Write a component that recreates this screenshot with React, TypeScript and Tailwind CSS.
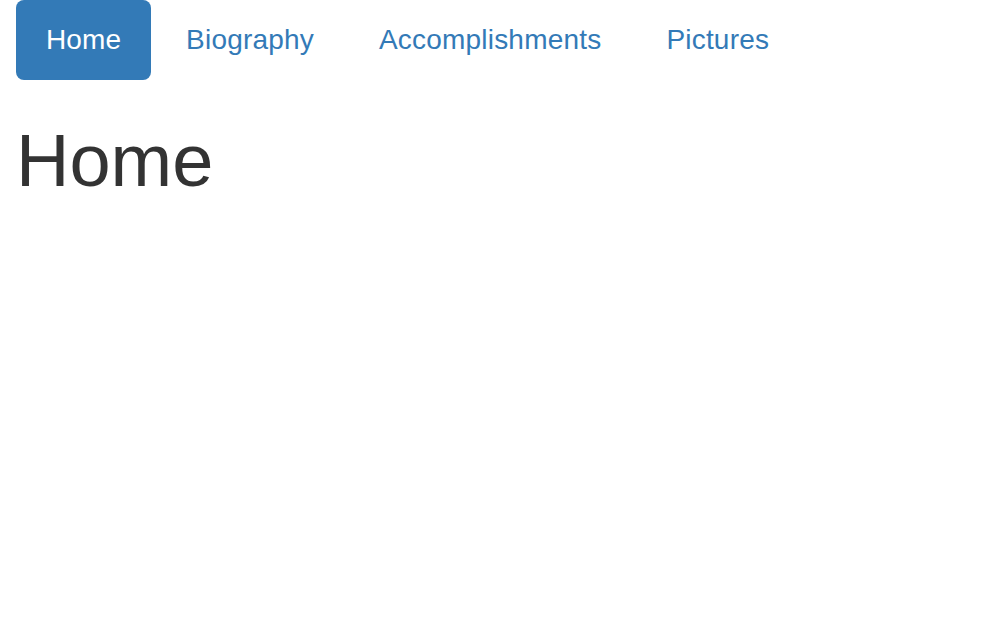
const links = ["Home", "Biography", "Accomplishments", "Pictures"];

const App = () => {
  return (
    <div className="min-h-screen bg-white px-4 font-['Liberation_Sans',Arial,sans-serif] text-[#333333]">
      <ul className="flex gap-[5px]">
        {links.map((l, i) => (
          <li key={l}>
            <a
              href="#"
              className={
                i === 0
                  ? "block rounded-lg bg-[#337ab7] px-[30px] py-5 text-[28px] leading-10 tracking-[0.1px] text-white"
                  : "block rounded-lg px-[30px] py-5 text-[28px] leading-10 tracking-[0.2px] text-[#337ab7]"
              }
            >
              {l}
            </a>
          </li>
        ))}
      </ul>
      <h1 className="mt-10 text-[74px] leading-[1.1] font-normal">Home</h1>
    </div>
  );
};

export default App;
